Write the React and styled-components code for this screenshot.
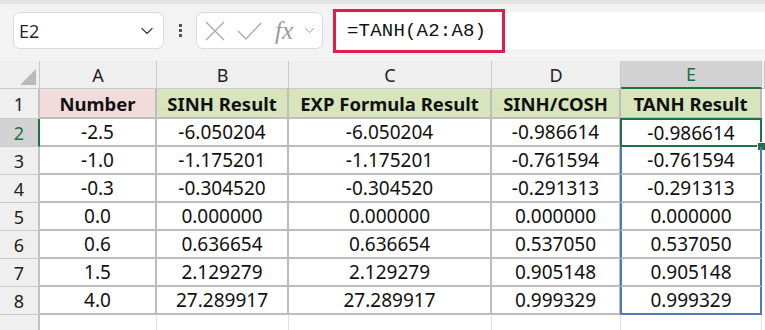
import React from "react";
import styled, { createGlobalStyle } from "styled-components";
import { ChevronDown } from "lucide-react";

const GlobalStyle = createGlobalStyle`
  body {
    margin: 0;
    background: #ffffff;
    font-family: "Noto Sans", "Liberation Sans", sans-serif;
  }
`;

const columns = [
  { key: "A", title: "Number", tint: "pink" },
  { key: "B", title: "SINH Result", tint: "green" },
  { key: "C", title: "EXP Formula Result", tint: "green" },
  { key: "D", title: "SINH/COSH", tint: "green" },
  { key: "E", title: "TANH Result", tint: "green" },
];

const rows = [
  ["-2.5", "-6.050204", "-6.050204", "-0.986614", "-0.986614"],
  ["-1.0", "-1.175201", "-1.175201", "-0.761594", "-0.761594"],
  ["-0.3", "-0.304520", "-0.304520", "-0.291313", "-0.291313"],
  ["0.0", "0.000000", "0.000000", "0.000000", "0.000000"],
  ["0.6", "0.636654", "0.636654", "0.537050", "0.537050"],
  ["1.5", "2.129279", "2.129279", "0.905148", "0.905148"],
  ["4.0", "27.289917", "27.289917", "0.999329", "0.999329"],
];

const App = () => {
  return (
    <Page>
      <GlobalStyle />
      <TopStrip />
      <FormulaBar>
        <NameBox>
          <span>E2</span>
          <ChevronDown size={20} strokeWidth={1.6} color="#444" />
        </NameBox>
        <Dots>
          <i />
          <i />
          <i />
        </Dots>
        <FxBox>
          {/* cancel */}
          <svg width="20" height="20" viewBox="0 0 20 20">
            <path d="M1 1L19 19M19 1L1 19" stroke="#ababab" strokeWidth="1.4" fill="none" />
          </svg>
          {/* enter */}
          <svg width="25" height="18" viewBox="0 0 25 18">
            <path d="M1 9L9 17L24 1" stroke="#ababab" strokeWidth="1.4" fill="none" />
          </svg>
          <Fx>fx</Fx>
          <ChevronDown size={17} strokeWidth={1.4} color="#9a9a9a" />
        </FxBox>
        <FormulaInput>
          <Highlight>=TANH(A2:A8)</Highlight>
        </FormulaInput>
      </FormulaBar>

      <Sheet>
        <Corner>
          <svg width="16" height="16" viewBox="0 0 16 16">
            <polygon points="16,0 16,16 0,16" fill="#b9b9b9" />
          </svg>
        </Corner>
        {columns.map((col) => (
          <ColHead key={col.key} selected={col.key === "E"}>
            {col.key}
          </ColHead>
        ))}
        <ColHead />

        <RowHead>1</RowHead>
        {columns.map((col) => (
          <TitleCell key={col.key} tint={col.tint}>
            {col.title}
          </TitleCell>
        ))}
        <Blank />

        {rows.map((row, r) => (
          <React.Fragment key={r}>
            <RowHead selected={r === 0}>{r + 2}</RowHead>
            {row.map((value, c) => {
              const inE = c === 4;
              return (
                <Cell
                  key={c}
                  active={inE && r === 0}
                  spill={inE && r > 0}
                  last={inE && r === rows.length - 1}
                >
                  {value}
                  {inE && r === 0 && <FillHandle />}
                </Cell>
              );
            })}
            <Blank />
          </React.Fragment>
        ))}

        {/* partial row 9, cut by the window */}
        <RowHead />
        {columns.map((col) => (
          <EmptyCell key={col.key} />
        ))}
        <Blank />
      </Sheet>
    </Page>
  );
};

// Styled Components
const Page = styled.div`
  width: 765px;
  height: 330px;
  overflow: hidden;
  background: #f3f3f3;
`;

const TopStrip = styled.div`
  height: 4px;
  background: #e2e2e2;
`;

const FormulaBar = styled.div`
  height: 57px;
  display: flex;
  align-items: flex-start;
  padding-top: 8px;
  box-sizing: border-box;
  background: #f3f3f3;
`;

const NameBox = styled.div`
  margin-left: 13px;
  width: 151px;
  height: 37px;
  box-sizing: border-box;
  background: #ffffff;
  border: 1px solid #d9d9d9;
  border-radius: 7px;
  display: flex;
  align-items: center;
  justify-content: space-between;
  padding: 0 6px 0 5px;
  font-family: "Open Sans", sans-serif;
  font-size: 18px;
  color: #222;
`;

const Dots = styled.div`
  width: 32px;
  height: 37px;
  display: flex;
  flex-direction: column;
  align-items: center;
  justify-content: center;
  gap: 2px;

  i {
    display: block;
    width: 3px;
    height: 3px;
    background: #555;
  }
`;

const FxBox = styled.div`
  width: 127px;
  height: 37px;
  box-sizing: border-box;
  background: #ffffff;
  border: 1px solid #d9d9d9;
  border-radius: 7px;
  display: flex;
  align-items: center;
  padding: 0 2px 0 8px;
  gap: 12px;
`;

const Fx = styled.span`
  font-family: "Liberation Serif", serif;
  font-style: italic;
  font-size: 25px;
  color: #9a9a9a;
  margin-left: 1px;
  margin-right: -4px;
  line-height: 1;
`;

const FormulaInput = styled.div`
  margin-left: 10px;
  flex: 1;
  height: 37px;
  background: #ffffff;
  display: flex;
  align-items: center;
`;

const Highlight = styled.span`
  width: 172px;
  height: 44px;
  box-sizing: border-box;
  border: 3px solid #dc1f4b;
  display: flex;
  align-items: center;
  padding-left: 11px;
  font-family: "Liberation Mono", monospace;
  font-size: 19px;
  letter-spacing: 0.2px;
  color: #111;
`;

const Sheet = styled.div`
  display: grid;
  grid-template-columns: 40px 117px 132px 203px 129px 141px 1fr;
  grid-template-rows: 28px 30px repeat(7, 28px) 20px;
  background: #ffffff;
  font-size: 19px;
  color: #111;
`;

const Corner = styled.div`
  background: #efefef;
  border-right: 1px solid #c9c9c9;
  border-bottom: 1px solid #c9c9c9;
  display: flex;
  align-items: flex-end;
  justify-content: flex-end;
  padding: 0 3px 3px 0;
`;

const ColHead = styled.div`
  background: ${(p) => (p.selected ? "#d3d3d3" : "#efefef")};
  color: ${(p) => (p.selected ? "#1e6f43" : "#222")};
  border-right: 1px solid #c9c9c9;
  border-bottom: ${(p) => (p.selected ? "2px solid #1e7145" : "1px solid #c9c9c9")};
  display: flex;
  align-items: center;
  justify-content: center;
  font-size: 18px;
`;

const RowHead = styled.div`
  background: ${(p) => (p.selected ? "#d3d3d3" : "#efefef")};
  color: ${(p) => (p.selected ? "#1e6f43" : "#222")};
  border-right: ${(p) => (p.selected ? "2px solid #1e7145" : "2px solid #c2c2c2")};
  border-bottom: 1px solid #c9c9c9;
  display: flex;
  align-items: center;
  justify-content: center;
  font-size: 18px;
`;

const TitleCell = styled.div`
  background: ${(p) => (p.tint === "pink" ? "#f2dcdb" : "#d8e4bc")};
  border-right: 2px solid #bdbdbd;
  border-bottom: 2px solid #bdbdbd;
  display: flex;
  align-items: center;
  justify-content: center;
  font-weight: 700;
  font-size: 18.5px;
  color: #111;
`;

const Cell = styled.div`
  position: relative;
  box-sizing: border-box;
  border-right: 2px solid #bdbdbd;
  border-bottom: 2px solid #bdbdbd;
  display: flex;
  align-items: center;
  justify-content: center;
  ${(p) =>
    p.active &&
    `
    border: 2px solid #1e7145;
    margin: -1px 0 0 -1px;
  `}
  ${(p) =>
    p.spill &&
    `
    border-left: 2px solid #4f78bf;
    border-right: 2px solid #4f78bf;
    margin-left: -1px;
  `}
  ${(p) => p.last && `border-bottom: 2px solid #4f78bf;`}
`;

const FillHandle = styled.span`
  position: absolute;
  right: -6px;
  bottom: -6px;
  width: 7px;
  height: 7px;
  background: #1e7145;
  border: 1px solid #ffffff;
`;

const Blank = styled.div`
  background: #ffffff;
`;

const EmptyCell = styled.div`
  border-right: 1px solid #e1e1e1;
`;

export default App;
